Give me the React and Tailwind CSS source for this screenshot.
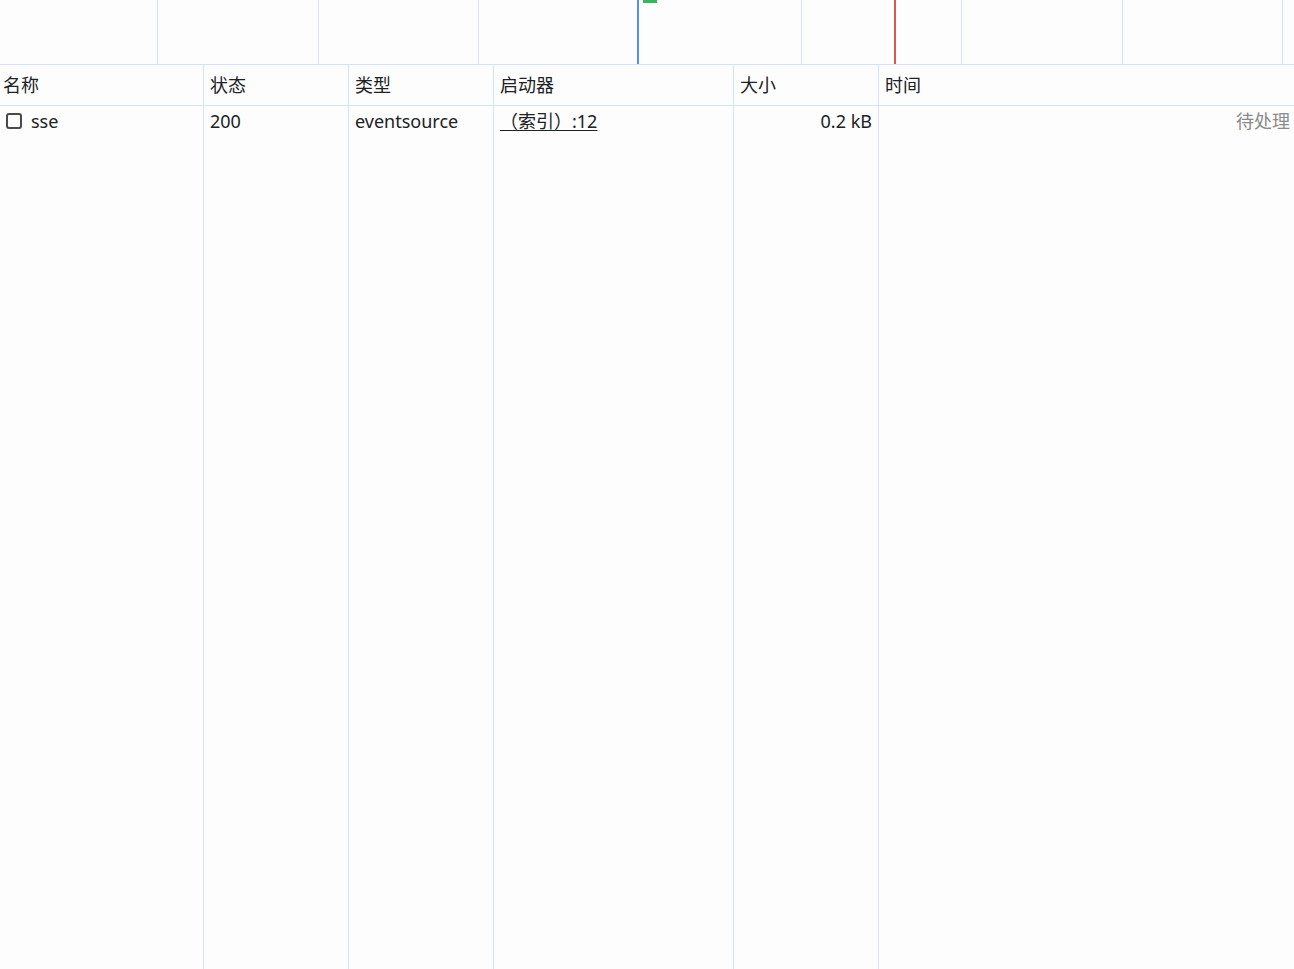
import React from 'react';

const cols = [
  { label: '名称', w: 'w-[203px]' },
  { label: '状态', w: 'w-[145px]' },
  { label: '类型', w: 'w-[145px]' },
  { label: '启动器', w: 'w-[240px]' },
  { label: '大小', w: 'w-[145px]' },
  { label: '时间', w: 'flex-1' },
];

// overview grid line positions (timeline canvas)
const gridLines = [157, 318, 478, 801, 961, 1122, 1282];

const Overview = () => (
  <div className="relative h-[65px] border-b border-[#d3e2f8]">
    {gridLines.map((x) => (
      <div key={x} className="absolute top-0 h-full w-px bg-[#d6e4f8]" style={{ left: x }} />
    ))}
    <div className="absolute top-0 left-[637px] h-full w-[2px] bg-[#5b8ee6]" />
    <div className="absolute top-0 left-[643px] h-[3px] w-[14px] bg-[#3cb55a]" />
    <div className="absolute top-0 left-[894px] h-full w-[2px] bg-[#d9584a]" />
  </div>
);

export default function App() {
  return (
    <div
      className="h-[969px] w-full overflow-hidden bg-[#fdfdfd] text-[18px] text-[#202124]"
      style={{ fontFamily: '"Noto Sans", "Noto Sans CJK SC", sans-serif' }}
    >
      <Overview />
      <div className="flex h-[904px]">
        {cols.map((c, i) => (
          <div key={c.label} className={`${c.w} flex flex-col ${i > 0 ? 'border-l border-[#d6e4f8]' : ''}`}>
            <div className={`flex h-[41px] items-center border-b border-[#d6e4f8] leading-none ${i === 0 ? 'pl-[3px]' : 'pl-[6px]'}`}>
              {c.label}
            </div>
            <div className="flex h-[30px] items-center leading-none">
              {i === 0 && (
                <div className="flex items-center pl-[6px]">
                  <span className="mr-[9px] h-[16px] w-[16px] rounded-[3px] border-2 border-[#4a4a4a]" />
                  sse
                </div>
              )}
              {i === 1 && <span className="pl-[6px]">200</span>}
              {i === 2 && <span className="pl-[6px]">eventsource</span>}
              {i === 3 && <span className="pl-[6px] underline underline-offset-2">（索引）:12</span>}
              {i === 4 && <span className="ml-auto pr-[6px]">0.2 kB</span>}
              {i === 5 && <span className="ml-auto pr-[4px] text-[#8a8a8a]">待处理</span>}
            </div>
          </div>
        ))}
      </div>
    </div>
  );
}
